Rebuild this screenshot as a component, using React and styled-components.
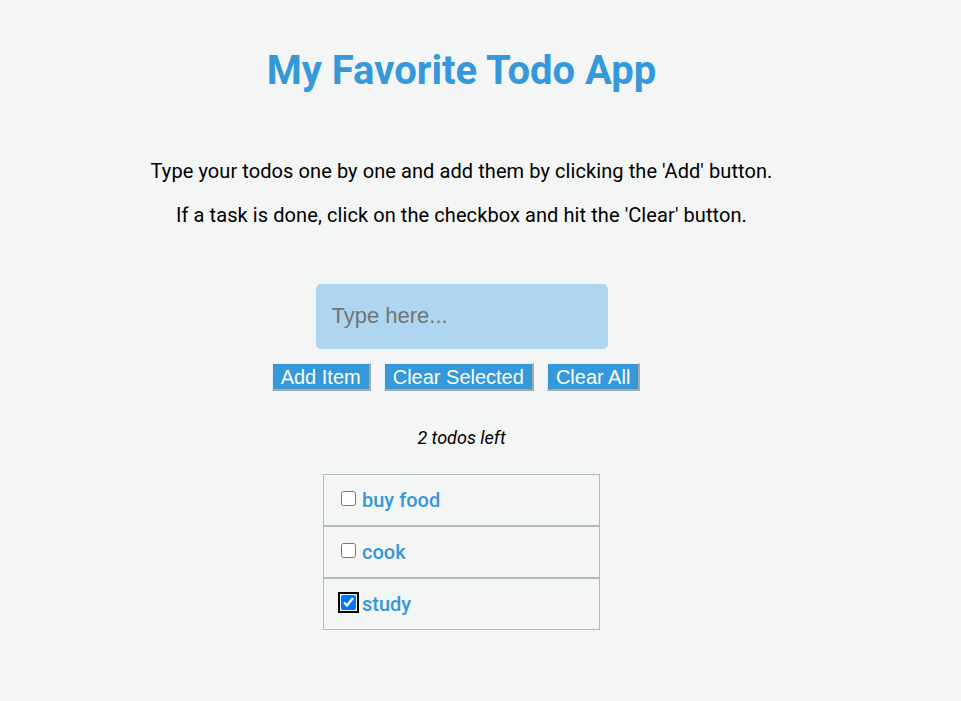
import React, { useState } from "react";
import styled, { createGlobalStyle } from "styled-components";

const GlobalStyle = createGlobalStyle`
  html, body {
    margin: 0;
    padding: 0;
    background: #f4f5f5;
  }
  body {
    font-family: Roboto, "Noto Sans", sans-serif;
  }
`;

const Page = styled.div`
  width: 923px;
  padding-top: 47px;
  display: flex;
  flex-direction: column;
  align-items: center;
  text-align: center;
`;

const Title = styled.h1`
  margin: 0;
  font-family: Roboto, sans-serif;
  font-weight: 700;
  font-size: 40px;
  line-height: 48px;
  color: #3498db;
`;

const Intro = styled.p`
  margin: ${(p) => p.$top}px 0 0;
  font-size: 20px;
  line-height: 24px;
  font-weight: 400;
  letter-spacing: 0.08px;
  color: #000;
`;

const Input = styled.input`
  margin-top: 57px;
  width: 292px;
  height: 65px;
  box-sizing: border-box;
  border: none;
  border-radius: 5px;
  background: #aed6f1;
  padding: 0 16px 2px;
  font-family: "Liberation Sans", Arial, sans-serif;
  font-size: 22px;
  color: #333;
  outline: none;
  &::placeholder {
    color: #747474;
  }
`;

const ButtonRow = styled.div`
  margin-top: 14px;
  display: flex;
  gap: 2px;
`;

const Button = styled.button`
  height: 28px;
  margin-right: 11px;
  box-sizing: border-box;
  padding: 0 8px;
  background: #3498db;
  color: #fff;
  font-family: "Liberation Sans", Arial, sans-serif;
  font-size: 20px;
  line-height: 24px;
  border-style: solid;
  border-width: 1px 2px 2px 1px;
  border-color: #e8eef2 #a9a9a9 #a9a9a9 #e8eef2;
  cursor: pointer;
`;

const Counter = styled.div`
  margin-top: 36px;
  font-style: italic;
  font-size: 18px;
  line-height: 22px;
  color: #000;
`;

const List = styled.ul`
  margin: 25px 0 0;
  padding: 0;
  list-style: none;
  width: 277px;
`;

const Row = styled.li`
  display: flex;
  align-items: center;
  height: 52px;
  box-sizing: border-box;
  border: 1px solid #b3b8bf;
  padding-left: 13px;
  text-align: left;
`;

const Check = styled.input`
  width: 15px;
  height: 15px;
  margin: 0 3px 3px 4px;
  ${(p) =>
    p.$focused &&
    `
    outline: 2px solid #000;
    outline-offset: 1px;
    border-radius: 3px;
  `}
`;

const Label = styled.span`
  margin-left: 3px;
  font-size: 20px;
  font-weight: 500;
  color: #3498db;
`;

export default function App() {
  const [todos, setTodos] = useState([
    { text: "buy food", done: false },
    { text: "cook", done: false },
    { text: "study", done: true },
  ]);
  const left = todos.filter((t) => !t.done).length;
  const toggle = (i) =>
    setTodos((ts) => ts.map((t, j) => (j === i ? { ...t, done: !t.done } : t)));

  return (
    <>
      <GlobalStyle />
      <Page>
        <Title>My Favorite Todo App</Title>
        <Intro $top={64}>
          Type your todos one by one and add them by clicking the 'Add' button.
        </Intro>
        <Intro $top={20}>
          If a task is done, click on the checkbox and hit the 'Clear' button.
        </Intro>
        <Input placeholder="Type here..." />
        <ButtonRow>
          <Button>Add Item</Button>
          <Button>Clear Selected</Button>
          <Button>Clear All</Button>
        </ButtonRow>
        <Counter>{left} todos left</Counter>
        <List>
          {todos.map((t, i) => (
            <Row key={i}>
              <Check
                type="checkbox"
                checked={t.done}
                onChange={() => toggle(i)}
                $focused={i === 2}
              />
              <Label>{t.text}</Label>
            </Row>
          ))}
        </List>
      </Page>
    </>
  );
}
